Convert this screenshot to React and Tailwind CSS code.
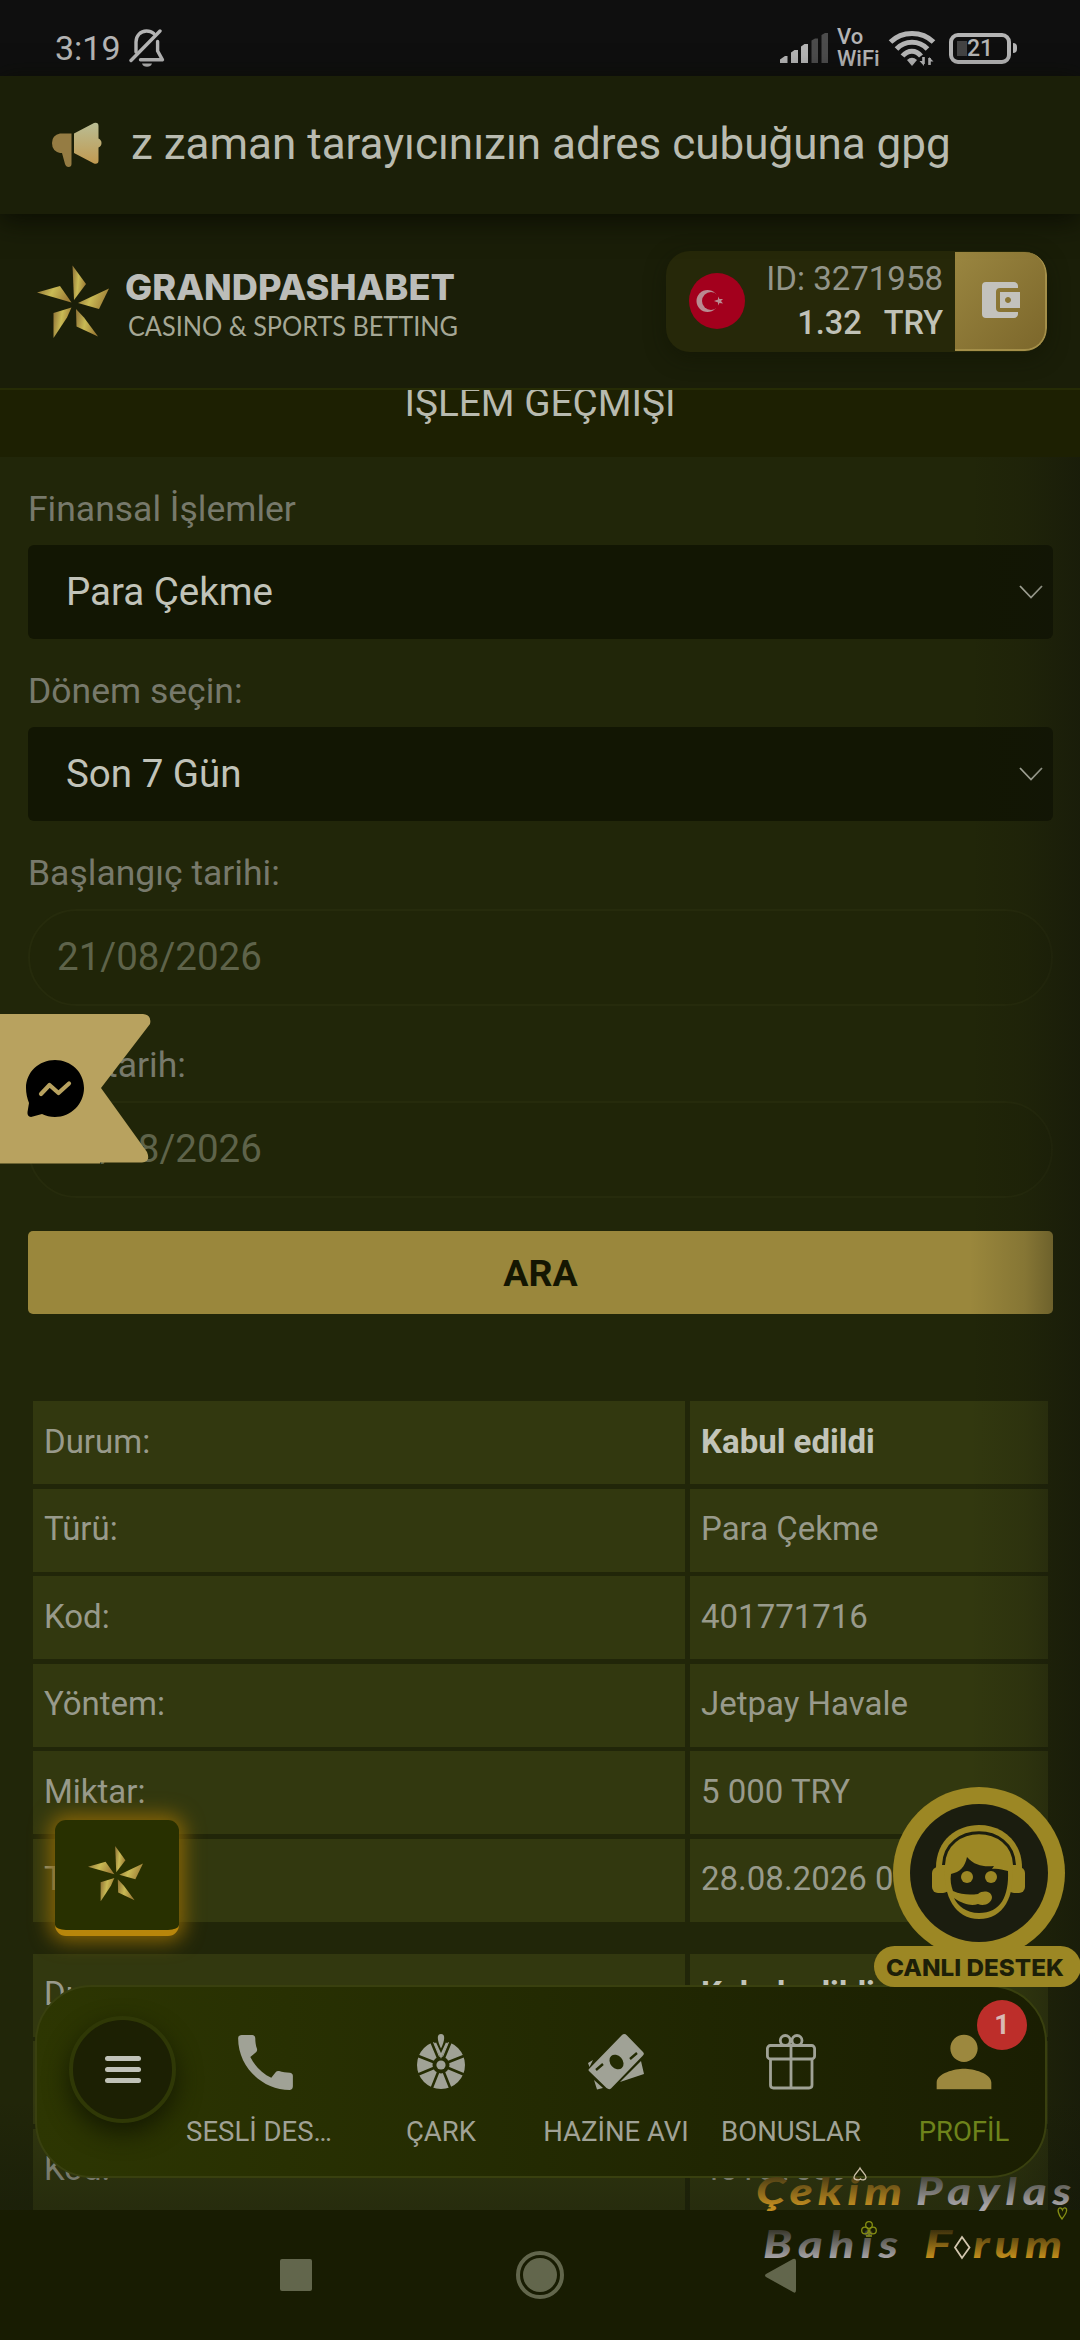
import React from 'react';
import { MdCall, MdPerson, MdAccountBalanceWallet } from 'react-icons/md';

const firstRecord = [
    { label: 'Durum:', value: 'Kabul edildi', strong: true },
    { label: 'Türü:', value: 'Para Çekme' },
    { label: 'Kod:', value: '401771716' },
    { label: 'Yöntem:', value: 'Jetpay Havale' },
    { label: 'Miktar:', value: '5 000 TRY' },
    { label: 'Tarih:', value: '28.08.2026 03:05' },
];

const secondRecord = [
    { label: 'Durum:', value: 'Kabul edildi', strong: true },
    { label: 'Türü:', value: 'Para Çekme' },
    { label: 'Kod:', value: '401616397' },
];

const BellOff = () => (
    <svg width="36" height="40" viewBox="0 0 36 40" fill="none" stroke="#b4b4b4" strokeWidth="3.4" strokeLinecap="round">
        <path d="M2 32.5 L31 3" />
        <path d="M7 24 V14 C7 7.5 11.5 3 17.5 3 C20.5 3 23 4 24.8 5.6" />
        <path d="M28.6 13.5 V23 L33.5 31.8 H11.5" strokeLinejoin="round" />
        <path d="M13 35.5 H23 A5.2 4.4 0 0 1 13 35.5 Z" fill="#b4b4b4" stroke="none" />
    </svg>
);

const Signal = () => (
    <svg width="49" height="32" viewBox="0 0 49 32" fill="#b4b4b4">
        <path d="M0 31 V27.5 L5 24 H7.5 V31 Z" />
        <path d="M11 31 V20.5 L14.5 18 H18 V31 Z" />
        <path d="M21 31 V14.5 L24.5 12 H28 V31 Z" />
        <path d="M31.5 31 V8.5 L35 6.5 H38 V31 Z" fill="#4c4c4c" />
        <path d="M41.5 31 V3 L45 1 H48 V31 Z" fill="#4c4c4c" />
    </svg>
);

const Wifi = () => (
    <svg width="48" height="38" viewBox="0 0 48 38" fill="none" stroke="#b4b4b4" strokeWidth="5">
        <path d="M2.5 13 C14 1.5 34 1.5 45.5 13" />
        <path d="M8.5 20 C17 11 31 11 39.5 20" />
        <path d="M14.5 27 C20 20.5 28 20.5 33 27" />
        <path d="M19 31 Q24 26.5 29 31 L24 37 Z" fill="#b4b4b4" stroke="none" />
        <path d="M35.5 28 V35 M41.5 36 V29" strokeWidth="2.6" />
        <path d="M31.5 32 H36 V37 Z M41 28 V32.5 H45.5 Z" fill="#b4b4b4" stroke="none" />
    </svg>
);

const Megaphone = () => (
    <svg width="50" height="46" viewBox="0 0 50 46">
        <defs>
            <linearGradient id="horn" x1="0" y1="0" x2="0" y2="1">
                <stop offset="0" stopColor="#b9bd94" />
                <stop offset="1" stopColor="#c19a51" />
            </linearGradient>
        </defs>
        <path d="M8 11.5 H19.5 V42 Q19.5 45 16.5 45 Q14 45 13 42 L10 31 H8 Q0 29 0 21 Q0 13 8 11.5 Z" fill="#957c43" />
        <path d="M22 11.5 L42 1 Q46.5 0 46.5 4 V16.5 Q49.5 18 49.5 21 Q49.5 24 46.5 25.5 V38.5 Q46.5 42.5 42 41.5 L22 31 Z" fill="url(#horn)" />
    </svg>
);

const Pinwheel = ({ className, id }) => (
    <svg className={className} viewBox="0 0 72 72">
        <defs>
            <linearGradient id={id} x1="0" y1="0" x2="1" y2="0.25">
                <stop offset="0" stopColor="#8d6f35" />
                <stop offset="0.5" stopColor="#c9bb55" />
                <stop offset="1" stopColor="#a08038" />
            </linearGradient>
        </defs>
        {['M35.5 0 L49 18.5 L37 34.5 Z', 'M0 27 L23 20.5 L34.5 37 Z', 'M72 23 L62 43.5 L41 37.5 Z', 'M34.5 42 L30 52 L16.5 72.5 V47.5 Z', 'M39 43.5 L47 52 L61 71 L39.5 61 Z'].map((d) => (
            <path key={d} d={d} fill={`url(#${id})`} />
        ))}
    </svg>
);

const Logo = () => (
    <svg width="336" height="76" viewBox="0 0 336 76">
        <text x="-1" y="37" textLength="330" lengthAdjust="spacingAndGlyphs" fontFamily="Inter, sans-serif" fontWeight="800" fontSize="35.5" fill="#bcbdb9">GRANDPASHABET</text>
        <text x="2" y="73" textLength="330" lengthAdjust="spacingAndGlyphs" fontFamily="Lato, sans-serif" fontWeight="400" fontSize="26" fill="#a5a795">CASINO &amp; SPORTS BETTING</text>
    </svg>
);

const Flag = () => (
    <svg width="56" height="56" viewBox="0 0 56 56">
        <circle cx="28" cy="28" r="28" fill="#a3001d" />
        <circle cx="18.5" cy="28" r="11" fill="#b98b91" />
        <circle cx="22" cy="28" r="9" fill="#a3001d" />
        <path d="M25 28 L29 26.5 V23.5 L30.5 26 L34 26 L32 28 L34 30.5 L30.5 30 L29 32.5 V29.5 Z" fill="#b98b91" />
    </svg>
);

const Chevron = () => (
    <svg width="24" height="14" viewBox="0 0 24 14" fill="none" stroke="#b5b7a9" strokeWidth="1.8">
        <path d="M1 1 L12 12.5 L23 1" />
    </svg>
);

const WheelIcon = () => (
    <svg width="48" height="56" viewBox="0 0 48 56">
        <defs>
            <mask id="spokes">
                <rect width="48" height="56" fill="#fff" />
                <g stroke="#000" strokeWidth="2.6">
                    <path d="M24 31 L0 21.5 M24 31 L48 21.5 M24 31 L0 41 M24 31 L48 41 M24 31 L14 56 M24 31 L34 56 M24 31 L14 7 M24 31 L34 7" />
                </g>
                <path d="M15 3 L24 25 L33 3 Z" fill="#000" />
                <circle cx="24" cy="31" r="8.5" fill="#000" />
            </mask>
        </defs>
        <circle cx="24" cy="31" r="24" fill="#a0a296" mask="url(#spokes)" />
        <circle cx="24" cy="31" r="4.6" fill="#a0a296" />
        <path d="M24 0 C28.5 0 28 6 24 14.5 C20 6 19.5 0 24 0 Z" fill="#a0a296" />
        <path d="M18 9 L24 22 L30 9" fill="none" stroke="#a0a296" strokeWidth="2.4" />
    </svg>
);

const MoneyIcon = () => (
    <svg width="56" height="56" viewBox="0 0 56 56" fill="#a0a296">
        <path d="M0 29 L5 26 L1.5 33 Z M6 46 L15 54 L9 55.5 Z M53 27 L56 40 L32 48 Z" />
        <path d="M1 35 L34 1 Q36.5 -1 39 1.5 L55 18 Q57 20 54.5 22 L23 54.5 Q21 56 18.5 54 L1 37 Q0 36 1 35 Z" />
        <ellipse cx="28.5" cy="28" rx="6.2" ry="8" transform="rotate(-42 28.5 28)" fill="#232b02" />
        <path d="M8 36 L15 30 M42 25 L49 19" stroke="#232b02" strokeWidth="2.4" />
    </svg>
);

const GiftIcon = () => (
    <svg width="50" height="56" viewBox="0 0 50 56" fill="none" stroke="#a0a296" strokeWidth="2.8">
        <rect x="1.4" y="11.5" width="47.2" height="13.5" rx="3" />
        <path d="M4.5 25 V51 Q4.5 54 7.5 54 H43 Q46 54 46 51 V25 M25 11 V54" />
        <circle cx="19.3" cy="6.5" r="5" />
        <circle cx="31" cy="6.5" r="5" />
    </svg>
);

const MenuItem = ({ label, children, labelClass = 'text-[#a0a296]', className = '' }) => (
    <div className={`flex flex-col items-center shrink-0 ${className}`}>
        <div className="h-14 flex items-center justify-center">{children}</div>
        <span className={`mt-[26px] text-[27.5px] leading-8 whitespace-nowrap ${labelClass}`}>{label}</span>
    </div>
);

const SelectField = ({ label, value }) => (
    <div className="mb-8">
        <p className="pt-px text-[35.5px] leading-[39px] text-[#77796b]">{label}</p>
        <div className="mt-4 h-[94px] rounded-md bg-[#121603] pl-[38px] pr-2.5 flex items-center justify-between">
            <span className="text-[38.5px] text-[#c1c3b9]">{value}</span>
            <Chevron />
        </div>
    </div>
);

const DateField = ({ label, value, className = '' }) => (
    <div className={className}>
        <p className="pt-px text-[35.5px] leading-[39px] text-[#77796b]">{label}</p>
        <div className="mt-4 h-[97px] rounded-full border-2 border-[#262b0c] bg-[#202508] pl-[27px] pb-0.5 flex items-center">
            <span className="text-[38.5px] text-[#5e634a]">{value}</span>
        </div>
    </div>
);

const RecordTable = ({ rows, className = '' }) => (
    <div className={`ml-[5px] w-[1015px] flex flex-col gap-[4.5px] ${className}`}>
        {rows.map((row) => (
            <div key={row.label} className="flex gap-[5px] h-[83px] shrink-0 text-[33px] text-[#989a8b]">
                <div className="w-[652px] bg-[#32380f] pl-[11px] pb-0.5 flex items-center">{row.label}</div>
                <div className={`flex-1 bg-[#32380f] pl-[11px] pb-0.5 flex items-center whitespace-nowrap ${row.strong ? 'font-bold text-[#c2c4b9]' : ''}`}>
                    {row.value}
                </div>
            </div>
        ))}
    </div>
);

const MessengerTab = () => (
    <div className="absolute left-0 top-[1014px]">
        <svg width="151" height="150" viewBox="0 0 151 150">
            <path d="M0 0 H143 Q152 1 150 10 L101 74 L147 138 Q151 148 142 148.5 H100 V149.5 H0 Z" fill="#b8a25f" />
            <path d="M55 46 C71 46 84 58 84 74 C84 90 71 103 55 103 C50 103 46 102 42 100 L31 103 Q27 102.5 27.5 98 L29 89 C27 84 26 79 26 74 C26 58 39 46 55 46 Z" fill="#000" />
            <path d="M41 80 L49.5 71 L58.5 79 L69 69.5" fill="none" stroke="#b8a25f" strokeWidth="4.2" strokeLinecap="round" strokeLinejoin="round" />
        </svg>
    </div>
);

const LiveSupport = () => (
    <div className="absolute left-[874px] top-[1786px]">
        <svg width="206" height="202" viewBox="0 0 206 202">
            <circle cx="105" cy="87" r="86" fill="#9c8724" />
            <circle cx="105" cy="87" r="69" fill="#1b1d0f" />
            <rect x="0" y="160" width="207" height="41" rx="20.5" fill="#9c8724" />
            {/* headset, hair and face outline */}
            <g fill="#9c8724">
                <path d="M62 84 C60 24 150 24 148 84 Z" />
                <rect x="58" y="81" width="17" height="26" rx="6" />
                <rect x="134" y="81" width="17" height="26" rx="6" />
                <path d="M71 82 H138 C141 110 130 133 105 133 C81 133 69 110 71 82 Z" />
            </g>
            <path d="M69.5 79 C71 36 139 36 140.5 79" fill="none" stroke="#1b1d0f" strokeWidth="3" />
            <path d="M77 88 C86 86 91 81 93 71 C101 80 110 81 120 80 L118 83 C124 82 128 84 134 85 C135 110 127 127 105 127 C92 127 84 120 80 112 C90 119 98 120 104 118 C110 121 118 117 118 111 C117 105 109 104 104 108 C96 109 88 109 79 105 C77 100 76 94 77 88 Z" fill="#1b1d0f" />
            <circle cx="93" cy="91" r="6" fill="#9c8724" />
            <circle cx="117" cy="91" r="6" fill="#9c8724" />
            <text x="12" y="190" textLength="178" lengthAdjust="spacingAndGlyphs" fontFamily="Inter, sans-serif" fontWeight="800" fontSize="23.5" fill="#1d1f08">CANLI DESTEK</text>
        </svg>
    </div>
);

const ForumMark = () => (
    <div className="absolute left-[750px] top-[2160px]">
        <svg width="330" height="110" viewBox="0 0 330 110" fontFamily="Lato, sans-serif" fontStyle="italic" fontWeight="900" fontSize="38">
            <defs>
                <linearGradient id="goldTop" gradientUnits="userSpaceOnUse" x1="0" y1="16" x2="0" y2="46">
                    <stop offset="0" stopColor="#4a3c14" />
                    <stop offset="1" stopColor="#c08c20" />
                </linearGradient>
                <linearGradient id="silverTop" gradientUnits="userSpaceOnUse" x1="0" y1="16" x2="0" y2="46">
                    <stop offset="0" stopColor="#45453a" />
                    <stop offset="1" stopColor="#a8a5a8" />
                </linearGradient>
                <linearGradient id="goldBottom" gradientUnits="userSpaceOnUse" x1="0" y1="70" x2="0" y2="99">
                    <stop offset="0" stopColor="#3c300c" />
                    <stop offset="1" stopColor="#c8921c" />
                </linearGradient>
                <linearGradient id="silverBottom" gradientUnits="userSpaceOnUse" x1="0" y1="70" x2="0" y2="99">
                    <stop offset="0" stopColor="#38372c" />
                    <stop offset="1" stopColor="#aaa7aa" />
                </linearGradient>
            </defs>
            <text x="6" y="45" textLength="151" lengthAdjust="spacingAndGlyphs" letterSpacing="4" fill="url(#goldTop)">Çekim</text>
            <text x="166" y="45" textLength="161" lengthAdjust="spacingAndGlyphs" letterSpacing="5" fill="url(#silverTop)">Paylas</text>
            <text x="13" y="98" textLength="141" lengthAdjust="spacingAndGlyphs" letterSpacing="5" fill="url(#silverBottom)">Bahis</text>
            <text x="174" y="98" textLength="28" lengthAdjust="spacingAndGlyphs" fill="url(#goldBottom)">F</text>
            <text x="223" y="98" textLength="94" lengthAdjust="spacingAndGlyphs" letterSpacing="4" fill="url(#goldBottom)">rum</text>
            {/* card suits */}
            <g fill="none" strokeWidth="1.3">
                <path d="M110 8 C112 12 116 14 116 17.5 C116 20 112 20.5 110.5 19 C109 20.5 104 20 104 17.5 C104 14 108 12 110 8 Z" stroke="#c9bda5" />
                <path d="M212 77 L219.5 87.5 L212 98 L205 87.5 Z" stroke="#d3c6ae" strokeWidth="1.8" />
                <g stroke="#868f12">
                    <circle cx="119" cy="65" r="3.3" />
                    <circle cx="115" cy="70.5" r="3.3" />
                    <circle cx="123" cy="70.5" r="3.3" />
                    <path d="M119 70 V75 M116 76 H122" />
                </g>
                <path d="M312 59 C308 54 307 49 309.5 48 C311 47.5 312 49 312.5 50 C313 48 315 47 316.5 49 C317.5 52 315 55 312 59 Z" stroke="#868f12" />
            </g>
        </svg>
    </div>
);

const App = () => {
    return (
        <div className="relative w-[1080px] h-[2340px] overflow-hidden flex flex-col bg-[#212609] font-['Roboto',sans-serif]">
            <div className="h-[76px] shrink-0 bg-[#0f0f0f] pl-[55px] pr-[63px] pt-5 flex items-center justify-between text-[#b4b4b4]">
                <div className="flex items-center">
                    <span className="text-[34px] leading-10 w-[74px]">3:19</span>
                    <BellOff />
                </div>
                <div className="flex items-center">
                    <Signal />
                    <div className="ml-2 w-[51px] text-[22px] leading-[22px] font-medium">
                        <p>Vo</p>
                        <p>WiFi</p>
                    </div>
                    <Wifi />
                    <div className="ml-[13px] w-[62px] h-[31px] rounded-[9px] border-4 border-[#b4b4b4] flex items-center pl-1">
                        <div className="w-2.5 h-[15px] bg-[#444]"></div>
                        <span className="text-[23px] font-medium leading-none">21</span>
                    </div>
                    <div className="ml-0.5 w-1 h-2.5 rounded-r bg-[#b4b4b4]"></div>
                </div>
            </div>

            <div className="relative z-10 h-[138px] shrink-0 bg-[#1b1f08] pl-[52px] flex items-center shadow-[0_6px_26px_#0b0d03]">
                <Megaphone />
                <p className="ml-[29px] -mt-0.5 text-[44px] whitespace-nowrap text-[#b9bbb0]">z zaman tarayıcınızın adres cubuğuna gpg</p>
            </div>

            <header className="h-[176px] shrink-0 bg-[#1a1e08] border-b-2 border-[#262c05] pl-[37px] pr-[33px] flex items-center justify-between">
                <div className="flex items-center">
                    <Pinwheel className="w-[72px] h-[73px]" id="logoGold" />
                    <div className="ml-[17px]">
                        <Logo />
                    </div>
                </div>
                <div className="w-[381px] h-[101px] rounded-[24px] bg-[#262809] shadow-[0_6px_20px_#10130480] pl-[23px] flex items-center overflow-hidden">
                    <Flag />
                    <div className="flex-1 pr-3 text-right">
                        <p className="text-[33px] leading-[44px] text-[#93958a]">ID: 3271958</p>
                        <p className="text-[32.5px] leading-[44px] font-medium text-[#c0c2b7]">
                            <span className="mr-[22px]">1.32</span>TRY
                        </p>
                    </div>
                    <div className="w-[92px] h-[99px] rounded-r-[22px] border-r-2 border-b-2 border-[#a48f49] bg-linear-to-br from-[#9a8640] to-[#7c672b] flex items-center justify-center text-[#c3c2bd]">
                        <MdAccountBalanceWallet size={48} />
                    </div>
                </div>
            </header>

            <div className="h-[67px] shrink-0 bg-[#1d2002] overflow-hidden text-center text-[38.7px] leading-[26px] text-[#b8baaf]">
                İŞLEM GEÇMİŞİ
            </div>

            <main className="relative flex-1 min-h-0 overflow-hidden pt-8 pl-7 pr-[27px]">
                <SelectField label="Finansal İşlemler" value="Para Çekme" />
                <SelectField label="Dönem seçin:" value="Son 7 Gün" />
                <DateField label="Başlangıç tarihi:" value="21/08/2026" />
                <DateField label="Bitiş tarih:" value="28/08/2026" className="mt-[39px]" />
                <button className="mt-[33px] block w-full h-[83px] rounded-[5px] bg-[#9a873c] pt-0.5 text-[37.5px] font-bold text-[#141602]">ARA</button>
                <RecordTable rows={firstRecord} className="mt-[87px]" />
                <RecordTable rows={secondRecord} className="mt-8" />
                <div className="absolute inset-y-0 right-0 w-[110px] bg-linear-to-r from-transparent via-[#12140a]/15 to-[#12140a]/50"></div>
                <div className="absolute bottom-0 inset-x-0 h-[110px] bg-linear-to-b from-transparent to-[#12160a]/35"></div>
            </main>

            <nav className="relative h-[130px] shrink-0 bg-[#181c02]">
                <svg width="1080" height="130" viewBox="0 0 1080 130" fill="#62664c">
                    <rect x="280" y="49" width="32" height="32" rx="2" />
                    <circle cx="540" cy="65" r="22" fill="none" stroke="#62664c" strokeWidth="4" />
                    <circle cx="540" cy="65" r="17" />
                    <path d="M766 64 L793 49 Q796 48 796 51 V80 Q796 84 793 82 L766 67 Q764 65.5 766 64 Z" />
                </svg>
            </nav>

            <MessengerTab />

            <div className="absolute left-[55px] top-[1820px] w-[124px] h-[116px] rounded-[11px] border-b-[6px] border-[#b8860b] bg-[#283000] shadow-[0_0_20px_5px_#8a6606] pr-1 pb-1 flex items-center justify-center">
                <Pinwheel className="w-[55px] h-[55px]" id="tileGold" />
            </div>

            <div className="absolute left-[35px] top-[1985px] w-[1012px] h-[193px] rounded-[57px] border-2 border-[#39400f] bg-linear-to-r from-[#2d3602] via-[#232a02] to-[#1a1e02] pl-8 flex items-start">
                <div className="mt-[29px] mr-1 w-[107px] h-[107px] shrink-0 rounded-full border-4 border-[#2f3806] bg-[#1c2003] shadow-[0_10px_24px_#151a02] flex flex-col items-center justify-center gap-[6px]">
                    <span className="w-9 h-[5px] rounded-full bg-[#c0c2b8]"></span>
                    <span className="w-9 h-[5px] rounded-full bg-[#c0c2b8]"></span>
                    <span className="w-9 h-[5px] rounded-full bg-[#c0c2b8]"></span>
                </div>
                <div className="mt-[47px] flex">
                    <MenuItem label="SESLİ DES…" className="w-[158px]">
                        <MdCall size={73} className="text-[#a0a296] shrink-0 relative left-1.5" />
                    </MenuItem>
                    <MenuItem label="ÇARK" className="w-[206px]">
                        <WheelIcon />
                    </MenuItem>
                    <MenuItem label="HAZİNE AVI" className="w-[144px]">
                        <MoneyIcon />
                    </MenuItem>
                    <MenuItem label="BONUSLAR" className="w-[206px]">
                        <GiftIcon />
                    </MenuItem>
                    <MenuItem label="PROFİL" className="w-[140px]" labelClass="text-[#6e831b]">
                        <MdPerson size={82} className="text-[#9c883e] shrink-0" />
                    </MenuItem>
                </div>
                <div className="absolute left-[940px] top-[13px] w-[50px] h-[50px] rounded-full bg-[#bd2e2a] text-[27px] font-bold text-[#d9b9b4] flex items-center justify-center">1</div>
            </div>

            <LiveSupport />
            <ForumMark />
        </div>
    );
};

export default App;
